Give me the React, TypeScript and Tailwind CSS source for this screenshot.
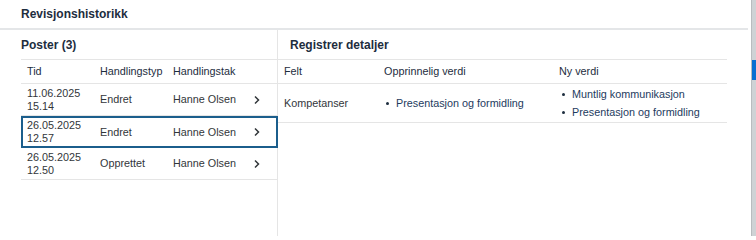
import React from 'react';

const posts = [
  { date: '11.06.2025', time: '15.14', type: 'Endret', by: 'Hanne Olsen', selected: false },
  { date: '26.05.2025', time: '12.57', type: 'Endret', by: 'Hanne Olsen', selected: true },
  { date: '26.05.2025', time: '12.50', type: 'Opprettet', by: 'Hanne Olsen', selected: false },
];

const Chevron = () => (
  <svg width="8" height="10" viewBox="0 0 8 10" fill="none">
    <path d="M2 1.5 L5.5 5 L2 8.5" stroke="#32363a" strokeWidth="1.5" />
  </svg>
);

const Bullet = ({ text }: { text: string }) => (
  <div className="flex items-center h-[18px]">
    <span className="w-[3px] h-[3px] rounded-full bg-[#1d2d3e] mr-[7px]" />
    <span>{text}</span>
  </div>
);

const App = () => {
  return (
    <div className="w-[756px] h-[236px] bg-[#cfd2d5] flex font-['Liberation_Sans',Arial,sans-serif] text-[10.8px] text-[#32363a] overflow-hidden">
      <div className="w-[752px] h-full bg-white flex flex-col border-r border-[#b9bcbf]">
        {/* Header */}
        <div className="h-[28px] flex items-center px-[21px] text-[12px] font-bold text-[#1d2d3e]">
          Revisjonshistorikk
        </div>
        <div className="h-[2px] bg-[#e4e6e8] mr-[3px]" />

        <div className="flex flex-1">
          {/* Poster */}
          <div className="w-[278px] pl-[21px] border-r border-[#e5e5e5]">
            <div className="h-[29px] flex items-center text-[12px] font-bold text-[#1d2d3e]">
              Poster (3)
            </div>
            <div className="grid grid-cols-[73px_73px_80px_1fr] items-center h-[25px] pl-[6px] border-y border-[#e5e5e5] text-[#1d2d3e]">
              <span>Tid</span>
              <span>Handlingstyp</span>
              <span>Handlingstak</span>
            </div>
            {posts.map((p, i) => (
              <div
                key={i}
                className={
                  p.selected
                    ? 'grid grid-cols-[73px_73px_80px_1fr] items-center h-[32px] pl-[4px] border-2 border-[#1b5e8c] -mr-px'
                    : 'grid grid-cols-[73px_73px_80px_1fr] items-center h-[32px] pl-[6px] border-b border-[#e5e5e5]'
                }
              >
                <div className="leading-[13px]">
                  <div>{p.date}</div>
                  <div>{p.time}</div>
                </div>
                <span>{p.type}</span>
                <span>{p.by}</span>
                <Chevron />
              </div>
            ))}
          </div>

          {/* Detaljer */}
          <div className="flex-1 mr-[24px]">
            <div className="h-[29px] flex items-center pl-[12px] text-[12px] font-bold text-[#1d2d3e]">
              Registrer detaljer
            </div>
            <div className="grid grid-cols-[100px_175px_1fr] items-center h-[25px] pl-[6px] border-y border-[#e5e5e5] text-[#1d2d3e]">
              <span>Felt</span>
              <span>Opprinnelig verdi</span>
              <span>Ny verdi</span>
            </div>
            <div className="grid grid-cols-[100px_175px_1fr] items-center py-[1px] pl-[6px] border-b border-[#e5e5e5]">
              <span>Kompetanser</span>
              <div className="pl-[2px] text-[#1d3b5e]">
                <Bullet text="Presentasjon og formidling" />
              </div>
              <div className="pl-[3px] text-[#1d3b5e]">
                <Bullet text="Muntlig kommunikasjon" />
                <Bullet text="Presentasjon og formidling" />
              </div>
            </div>
          </div>
        </div>
      </div>
      <div className="flex-1 flex flex-col">
        <div className="h-[60px]" />
        <div className="h-[20px] bg-[#0a6ed1]" />
      </div>
    </div>
  );
};

export default App;
